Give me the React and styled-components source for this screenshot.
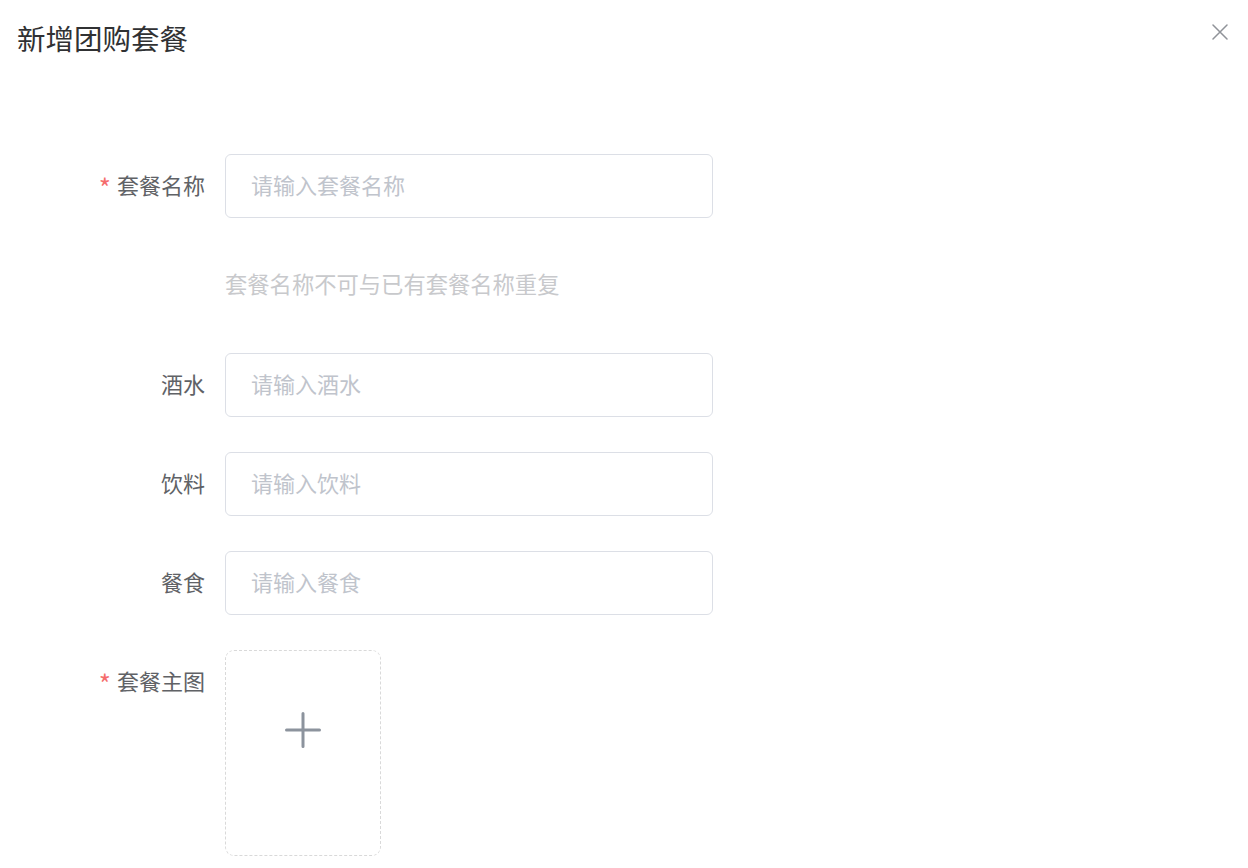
import React from "react";
import styled, { createGlobalStyle } from "styled-components";

const GlobalStyle = createGlobalStyle`
  html, body {
    margin: 0;
    padding: 0;
    background: #ffffff;
  }
  body {
    font-family: "Noto Sans CJK SC", "Noto Sans", "Liberation Sans", sans-serif;
  }
  * {
    box-sizing: border-box;
  }
`;

const Dialog = styled.div`
  width: 1248px;
  min-height: 868px;
  background: #ffffff;
`;

const Header = styled.div`
  display: flex;
  justify-content: space-between;
  align-items: flex-start;
  padding: 18px 20px 0 17px;
`;

const Title = styled.h2`
  margin: 0;
  font-size: 28.5px;
  line-height: 40px;
  font-weight: 400;
  color: #303133;
`;

const CloseButton = styled.button`
  border: none;
  background: transparent;
  padding: 0;
  margin-top: 6px;
  width: 16px;
  height: 16px;
  display: flex;
  cursor: pointer;
`;

const Form = styled.form`
  margin-top: 96px;
  display: flex;
  flex-direction: column;
  gap: 35px;
`;

const Row = styled.div`
  display: grid;
  grid-template-columns: 205px 488px;
  column-gap: 20px;
  align-items: start;
`;

const Label = styled.label`
  text-align: right;
  font-size: 22px;
  line-height: 60px;
  color: #606266;
  white-space: nowrap;
`;

const Required = styled.span`
  color: #f56c6c;
  font-size: 26px;
  vertical-align: -4px;
  margin-right: 6px;
`;

const Input = styled.input`
  width: 488px;
  height: 64px;
  border: 1px solid #dcdfe6;
  border-radius: 6px;
  padding: 0 25px 4px;
  font-family: inherit;
  font-size: 22px;
  color: #606266;
  outline: none;

  &::placeholder {
    color: #c0c4cc;
  }
`;

const Hint = styled.div`
  height: 65px;
  font-size: 22.3px;
  line-height: 60px;
  color: #c8c9cc;
  white-space: nowrap;
`;

const Upload = styled.div`
  width: 156px;
  height: 206px;
  border: 1px dashed #d9d9d9;
  border-radius: 9px;
  display: flex;
  justify-content: center;
  padding-top: 61px;
  cursor: pointer;
`;

const CloseIcon = () => (
  <svg width="16" height="16" viewBox="0 0 16 16">
    <path d="M1 1 L15 15 M15 1 L1 15" stroke="#909399" strokeWidth="1.5" strokeLinecap="round" />
  </svg>
);

const PlusIcon = () => (
  <svg width="36" height="36" viewBox="0 0 36 36">
    <path d="M18 1.5 V34.5 M1.5 18 H34.5" stroke="#8c939d" strokeWidth="3" strokeLinecap="round" />
  </svg>
);

const fields = [
  { label: "酒水", placeholder: "请输入酒水" },
  { label: "饮料", placeholder: "请输入饮料" },
  { label: "餐食", placeholder: "请输入餐食" },
];

export default function App() {
  return (
    <>
      <GlobalStyle />
      <Dialog>
        <Header>
          <Title>新增团购套餐</Title>
          <CloseButton type="button" aria-label="关闭">
            <CloseIcon />
          </CloseButton>
        </Header>
        <Form onSubmit={(e) => e.preventDefault()}>
          <Row>
            <Label>
              <Required>*</Required>套餐名称
            </Label>
            <Input placeholder="请输入套餐名称" />
          </Row>
          <Row>
            <span />
            <Hint>套餐名称不可与已有套餐名称重复</Hint>
          </Row>
          {fields.map((f) => (
            <Row key={f.label}>
              <Label>{f.label}</Label>
              <Input placeholder={f.placeholder} />
            </Row>
          ))}
          <Row>
            <Label>
              <Required>*</Required>套餐主图
            </Label>
            <Upload>
              <PlusIcon />
            </Upload>
          </Row>
        </Form>
      </Dialog>
    </>
  );
}
